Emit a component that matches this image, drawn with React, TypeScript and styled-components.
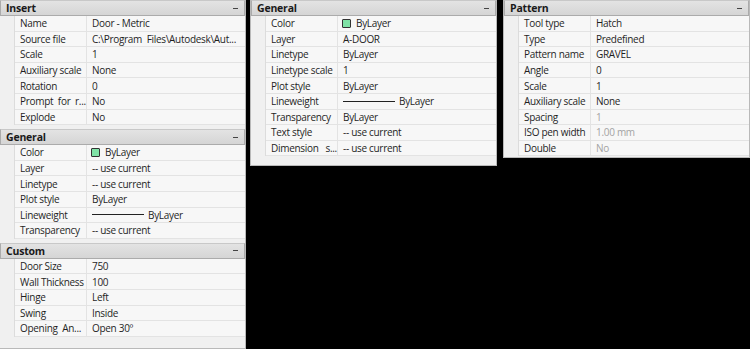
import React from 'react'
import styled, { createGlobalStyle } from 'styled-components'

const Global = createGlobalStyle`
  html, body {
    margin: 0;
    padding: 0;
    background: #000;
  }
`

const Page = styled.div`
  display: flex;
  align-items: flex-start;
  width: 750px;
  height: 349px;
  background: #000;
  font-family: 'Open Sans', 'Noto Sans', sans-serif;
  font-size: 10px;
  letter-spacing: -0.3px;
  color: #1f1f1f;
  overflow: hidden;
`

const Panel = styled.div<{ $width: number; $height?: number; $gap?: number }>`
  display: flex;
  flex-direction: column;
  gap: 4px;
  width: ${p => p.$width}px;
  height: ${p => (p.$height ? `${p.$height}px` : 'auto')};
  margin-right: ${p => p.$gap ?? 0}px;
  box-sizing: border-box;
  background: #f0f0f0;
  border: 1px solid #b9b9b9;
  border-top: none;
  border-left: ${p => (p.$gap === 4 ? 'none' : '1px solid #b9b9b9')};
`

const Section = styled.div`
  display: flex;
  flex-direction: column;
`

const Header = styled.div`
  display: flex;
  align-items: center;
  justify-content: space-between;
  height: 16px;
  box-sizing: border-box;
  padding: 0 6px 0 5px;
  background: linear-gradient(#e3e3e3, #d5d5d5);
  border: 1px solid #ababab;
  border-top-color: #c8c8c8;
  font-weight: 700;
  font-size: 10.5px;
  letter-spacing: -0.2px;
  color: #1a1a1a;
`

const Collapse = styled.span`
  width: 5px;
  height: 1px;
  background: #444;
`

const Row = styled.div`
  display: grid;
  grid-template-columns: 15px 72px 1fr;
  height: 15.6px;
`

const Gutter = styled.div`
  background: #f0f0f0;
  border-right: 1px solid #dcdcdc;
`

const Cell = styled.div<{ $dim?: boolean }>`
  display: flex;
  align-items: center;
  gap: 5px;
  overflow: hidden;
  white-space: pre;
  padding-left: 5px;
  background: #f7f7f7;
  border-bottom: 1px solid #e3e3e3;
  color: ${p => (p.$dim ? '#a3a3a3' : '#1f1f1f')};
`

const NameCell = styled(Cell)`
  border-right: 1px solid #e3e3e3;
`

const Swatch = styled.span`
  width: 7px;
  height: 7px;
  border-radius: 1px;
  background: #7fe3a6;
  border: 1px solid #333;
  margin-left: -1px;
`

const Weight = styled.span`
  width: 52px;
  height: 1px;
  background: #222;
  margin-right: -1px;
`

type Prop = { name: string; value: string; kind?: 'color' | 'weight'; dim?: boolean }

function Value({ p }: { p: Prop }) {
  return (
    <Cell $dim={p.dim}>
      {p.kind === 'color' && <Swatch />}
      {p.kind === 'weight' && <Weight />}
      {p.value}
    </Cell>
  )
}

function Group({ title, props }: { title: string; props: Prop[] }) {
  return (
    <Section>
      <Header>
        {title}
        <Collapse />
      </Header>
      {props.map(p => (
        <Row key={p.name}>
          <Gutter />
          <NameCell>{p.name}</NameCell>
          <Value p={p} />
        </Row>
      ))}
    </Section>
  )
}

const insert: Prop[] = [
  { name: 'Name', value: 'Door - Metric' },
  { name: 'Source file', value: 'C:\\Program  Files\\Autodesk\\Aut...' },
  { name: 'Scale', value: '1' },
  { name: 'Auxiliary scale', value: 'None' },
  { name: 'Rotation', value: '0' },
  { name: 'Prompt  for  r...', value: 'No' },
  { name: 'Explode', value: 'No' },
]

const general1: Prop[] = [
  { name: 'Color', value: 'ByLayer', kind: 'color' },
  { name: 'Layer', value: '-- use current' },
  { name: 'Linetype', value: '-- use current' },
  { name: 'Plot style', value: 'ByLayer' },
  { name: 'Lineweight', value: 'ByLayer', kind: 'weight' },
  { name: 'Transparency', value: '-- use current' },
]

const custom: Prop[] = [
  { name: 'Door Size', value: '750' },
  { name: 'Wall Thickness', value: '100' },
  { name: 'Hinge', value: 'Left' },
  { name: 'Swing', value: 'Inside' },
  { name: 'Opening  An...', value: 'Open 30º' },
]

const general2: Prop[] = [
  { name: 'Color', value: 'ByLayer', kind: 'color' },
  { name: 'Layer', value: 'A-DOOR' },
  { name: 'Linetype', value: 'ByLayer' },
  { name: 'Linetype scale', value: '1' },
  { name: 'Plot style', value: 'ByLayer' },
  { name: 'Lineweight', value: 'ByLayer', kind: 'weight' },
  { name: 'Transparency', value: 'ByLayer' },
  { name: 'Text style', value: '-- use current' },
  { name: 'Dimension   s...', value: '-- use current' },
]

const pattern: Prop[] = [
  { name: 'Tool type', value: 'Hatch' },
  { name: 'Type', value: 'Predefined' },
  { name: 'Pattern name', value: 'GRAVEL' },
  { name: 'Angle', value: '0' },
  { name: 'Scale', value: '1' },
  { name: 'Auxiliary scale', value: 'None' },
  { name: 'Spacing', value: '1', dim: true },
  { name: 'ISO pen width', value: '1.00 mm', dim: true },
  { name: 'Double', value: 'No', dim: true },
]

export default function App() {
  return (
    <>
      <Global />
      <Page>
        <Panel $width={246} $height={349} $gap={4}>
          <Group title="Insert" props={insert} />
          <Group title="General" props={general1} />
          <Group title="Custom" props={custom} />
        </Panel>
        <Panel $width={247} $height={166} $gap={6}>
          <Group title="General" props={general2} />
        </Panel>
        <Panel $width={247} $height={158}>
          <Group title="Pattern" props={pattern} />
        </Panel>
      </Page>
    </>
  )
}
